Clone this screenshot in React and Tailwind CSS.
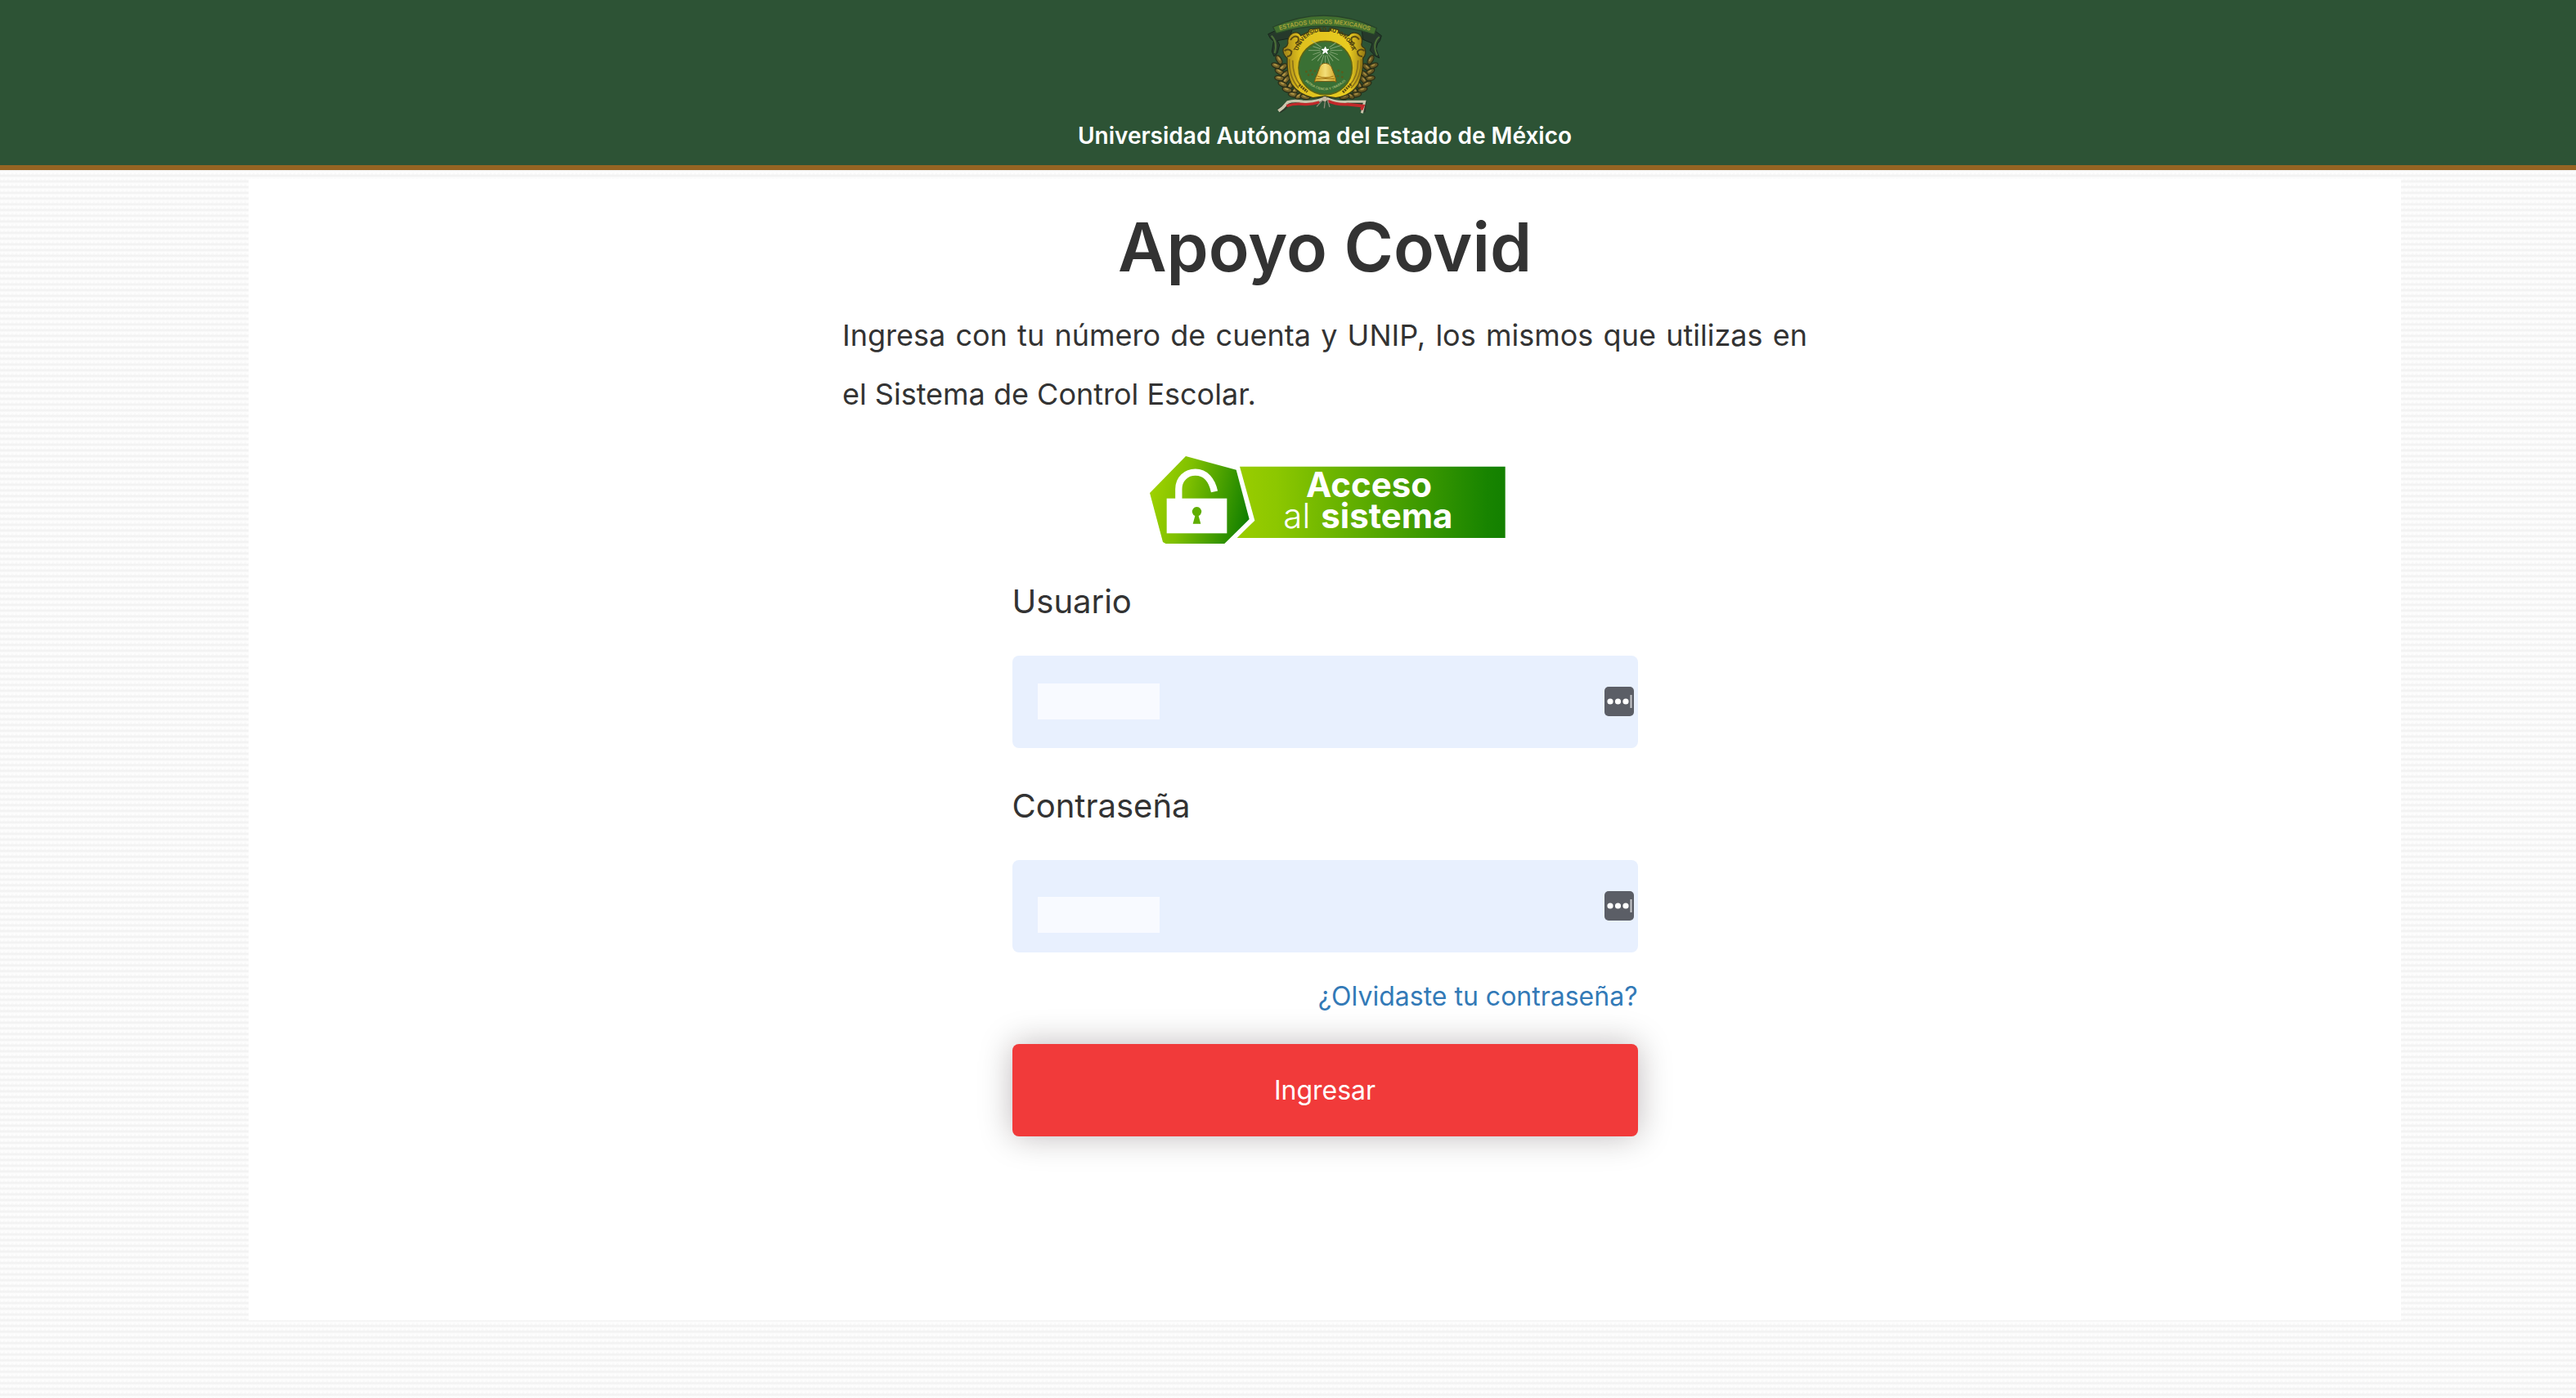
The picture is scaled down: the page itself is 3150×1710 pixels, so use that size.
import React, { useState } from "react";

const Crest = () => (
  <svg viewBox="84 47 432 372" className="w-36 h-31" role="img" aria-label="Escudo UAEM">
    <defs>
      <linearGradient id="gold" x1="0" x2="1" y1="0" y2="0">
        <stop offset="0" stopColor="#a08218" />
        <stop offset="0.2" stopColor="#dfc01d" />
        <stop offset="0.8" stopColor="#e8cb20" />
        <stop offset="1" stopColor="#957712" />
      </linearGradient>
      <linearGradient id="bell" x1="0" x2="1" y1="0" y2="0">
        <stop offset="0" stopColor="#d9b02a" />
        <stop offset="0.5" stopColor="#f3de78" />
        <stop offset="1" stopColor="#cfa324" />
      </linearGradient>
      <path id="ribbonArc" d="M122 114 Q300 58 478 116" />
      <path id="ringArc" d="M201 228 A102 96 0 1 1 401 228" />
      <path id="lowerArc" d="M226 296 Q300 364 378 296" />
    </defs>

    {/* ribbon tails */}
    <path d="M118 112 L92 124 Q98 142 112 150 L106 188 L114 206 L126 194 L134 164 L126 148 L170 140 L180 108 Z" fill="#26392b" stroke="#18271d" strokeWidth="3" />
    <path d="M104 130 Q128 152 116 194" fill="none" stroke="#4b6f38" strokeWidth="6" />
    <path d="M484 112 L508 130 Q504 152 494 158 L488 178 L500 212 L484 204 L466 184 L474 158 L440 144 L436 112 Z" fill="#26392b" stroke="#18271d" strokeWidth="3" />
    <path d="M500 134 Q472 160 492 202" fill="none" stroke="#4b6f38" strokeWidth="6" />

    {/* laurel branches */}
    {[
      [132, 218, 60], [122, 240, 20], [146, 246, -40], [134, 262, 30], [154, 272, -40], [134, 286, 10],
      [158, 292, -50], [146, 308, 25], [174, 312, -60], [162, 328, 15], [190, 332, -60], [184, 346, 10],
      [208, 350, -30], [228, 354, 10],
    ].map(([x, y, a], i) => (
      <g key={i}>
        <ellipse cx={x} cy={y} rx="18" ry="9" transform={`rotate(${a} ${x} ${y})`} fill="#75642a" stroke="#292d17" strokeWidth="4" />
        <ellipse cx={x - 3} cy={y - 2} rx="8" ry="3" transform={`rotate(${a} ${x} ${y})`} fill="#b09546" />
        <ellipse cx={600 - x} cy={y} rx="18" ry="9" transform={`rotate(${-a} ${600 - x} ${y})`} fill="#655722" stroke="#292d17" strokeWidth="4" />
        <ellipse cx={600 - x} cy={y - 2} rx="8" ry="3" transform={`rotate(${-a} ${600 - x} ${y})`} fill="#a08740" />
      </g>
    ))}

    {/* gold frame */}
    <path
      d="M256 106 L278 102 L284 114 L316 114 L324 102 L350 108 L352 120 L388 130 Q398 114 422 122 Q440 134 436 156 Q430 168 446 176 Q456 196 440 212 Q442 262 424 306 Q398 350 340 358 L300 352 L256 358 Q204 346 178 308 Q160 270 162 212 Q142 196 148 176 Q168 168 164 148 Q168 122 192 118 Q206 118 212 130 L240 116 L244 106 Z"
      fill="url(#gold)" stroke="#3a3a16" strokeWidth="4"
    />
    <path d="M174 146 Q186 126 202 136 Q208 152 192 158 M152 186 Q166 174 178 188 Q178 206 162 206 M426 144 Q412 126 398 138 Q394 154 410 158 M446 186 Q432 174 420 188 Q420 206 438 206" fill="none" stroke="#5b4c12" strokeWidth="6" />
    <path d="M170 216 Q168 284 204 322 M182 220 Q182 280 212 314 M434 216 Q434 284 396 322 M422 220 Q422 280 390 314" fill="none" stroke="#8c7318" strokeWidth="5" />
    <path d="M186 182 Q196 164 216 152 M416 182 Q404 162 386 150" fill="none" stroke="#6b5a15" strokeWidth="4" />
    <path d="M206 310 L236 336 M396 308 L366 338" stroke="#5b4c12" strokeWidth="10" strokeDasharray="6 3" />

    {/* inner disc */}
    <circle cx="302" cy="248" r="98" fill="#3a7034" stroke="#5c6518" strokeWidth="5" />
    <g stroke="#9fbb8f" strokeWidth="3">
      {[0, 18, 36, 54, 72, 90, 108, 126, 144, 162, 180, 198, 216, 324, 342].map((a, i) => (
        <line key={a} x1="320" y1="184" x2={i % 2 ? 350 : 364} y2="184" transform={`rotate(${a} 302 184)`} opacity="0.7" />
      ))}
    </g>
    <path d="M302 171 L305 180 L315 180 L307 186 L310 196 L302 190 L293 196 L296 186 L288 180 L298 180 Z" fill="#ffffff" stroke="#ffffff" strokeWidth="3" />
    <path d="M302 231 Q316 231 324 244 L336 274 Q340 282 342 300 L332 297 H272 L262 300 Q264 286 272 272 L282 244 Q288 231 302 231 Z" fill="url(#bell)" stroke="#7b5b12" strokeWidth="3" />
    <path d="M272 278 Q304 290 332 278 M268 288 H336" fill="none" stroke="#a87c18" strokeWidth="4" />
    <g fill="#5b5b1c">
      {[[232, 262], [248, 258], [264, 260], [240, 274], [254, 272], [350, 258], [364, 264], [348, 278], [364, 282]].map(([x, y]) => (
        <circle key={`${x}-${y}`} cx={x} cy={y} r="4" />
      ))}
    </g>
    <text fontSize="12" fill="#a7bd78" fontWeight="600">
      <textPath href="#lowerArc" startOffset="50%" textAnchor="middle">PATRIA CIENCIA Y TRABAJO</textPath>
    </text>
    <text fontSize="20" fill="#4b3f10" fontWeight="700">
      <textPath href="#ringArc" startOffset="50%" textAnchor="middle">UNIVERSIDAD AUTONOMA</textPath>
    </text>

    {/* top ribbon */}
    <path d="M110 98 Q300 12 490 102 L482 126 Q300 66 122 122 Z" fill="#43702f" stroke="#27442a" strokeWidth="4" />
    <text fontSize="22" fill="#a9a53a" fontWeight="600">
      <textPath href="#ribbonArc" startOffset="50%" textAnchor="middle">ESTADOS UNIDOS MEXICANOS</textPath>
    </text>

    {/* tricolor bow */}
    <path d="M294 362 Q260 380 218 376 Q186 372 166 378 L148 396 L132 406" fill="none" stroke="#2b3a2a" strokeWidth="19" />
    <path d="M294 362 Q260 376 218 372 Q186 366 164 374 L146 394 L130 406" fill="none" stroke="#c9c6ad" strokeWidth="11" />
    <path d="M280 374 Q250 384 218 381 Q186 378 160 388" fill="none" stroke="#c22a2b" strokeWidth="10" />
    <path d="M308 362 Q340 380 384 376 L442 378 L440 410" fill="none" stroke="#2b3a2a" strokeWidth="19" />
    <path d="M308 360 Q340 376 384 372 L446 372 L436 414" fill="none" stroke="#c9c6ad" strokeWidth="9" />
    <path d="M312 370 Q344 384 384 382 L440 388 L434 402" fill="none" stroke="#c22a2b" strokeWidth="11" />
    <path d="M300 358 L270 390 M302 362 L298 396 M310 366 L318 392" stroke="#8f8a78" strokeWidth="4" />
    <circle cx="300" cy="362" r="9" fill="#c8b9a0" />
  </svg>
);

const AccessBanner = () => (
  <svg viewBox="60 57 1323 321" className="w-[441px] h-[107px]" role="img" aria-label="Acceso al sistema">
    <defs>
      <linearGradient id="bar" x1="0" x2="1" y1="0" y2="0">
        <stop offset="0" stopColor="#9acd00" />
        <stop offset="0.15" stopColor="#8cc700" />
        <stop offset="0.93" stopColor="#188400" />
        <stop offset="1" stopColor="#138000" />
      </linearGradient>
      <linearGradient id="badge" x1="0" x2="1" y1="0.4" y2="0.6">
        <stop offset="0" stopColor="#9fd200" />
        <stop offset="0.35" stopColor="#7fc000" />
        <stop offset="1" stopColor="#138000" />
      </linearGradient>
    </defs>
    <path d="M408 95 H1382 V357 H398 L463 293 Z" fill="url(#bar)" />
    <path d="M210 57 L395 107 L443 288 L350 380 H140 L126 372 L78 192 Z" fill="url(#badge)" />
    <rect x="140" y="212" width="221" height="128" fill="#fff" />
    <path d="M184 214 V178 C184 140 212 116 245 116 C282 116 306 145 315 187" fill="none" stroke="#fff" strokeWidth="25" />
    <path d="M236 305 L244 276 A17 17 0 1 1 257 276 L265 305 Z" fill="#5fae00" />
    <text x="882" y="208" fontSize="126" fontWeight="700" textAnchor="middle" fill="#fff">Acceso</text>
    <text x="568" y="322" fontSize="126" fontWeight="300" fill="#fff">al</text>
    <text x="706" y="322" fontSize="126" fontWeight="700" fill="#fff">sistema</text>
  </svg>
);

const ManagerIcon = () => (
  <svg viewBox="0 0 36 36" className="absolute right-[5px] top-[38px] w-9 h-9" aria-hidden="true">
    <rect width="36" height="36" rx="5" fill="#5b5e66" />
    <circle cx="7" cy="18" r="3.6" fill="#fff" />
    <circle cx="16.5" cy="18" r="3.6" fill="#fff" />
    <circle cx="26" cy="18" r="3.6" fill="#fff" />
    <rect x="31.5" y="10" width="2" height="16" fill="#c9cacd" />
  </svg>
);

const Field = ({ id, label, type, value, onChange, maskClass }) => (
  <div>
    <label htmlFor={id} className="block text-[40px] leading-12">{label}</label>
    <div className="relative mt-[42px]">
      <input
        id={id}
        type={type}
        value={value}
        onChange={(e) => onChange(e.target.value)}
        className="block w-full h-[113px] rounded-lg bg-[#e8f0fe] px-8 text-[32px] outline-none"
      />
      <span className={`absolute left-[31px] w-[149px] h-11 bg-[#f8faff] pointer-events-none ${maskClass}`} />
      <ManagerIcon />
    </div>
  </div>
);

export default function App() {
  const [user, setUser] = useState("");
  const [password, setPassword] = useState("");

  return (
    <div className="min-h-screen font-['Inter','Liberation_Sans',sans-serif] text-[#333333] bg-[#fafafa] bg-[radial-gradient(circle_at_50%_30%,#ffffff_0,transparent_2px),repeating-linear-gradient(to_bottom,#fdfdfd_0px,#f8f8f8_3px,#f1f1f1_5px,#fbfbfb_7px)] bg-size-[5px_7px,auto]">
      <header className="flex flex-col items-center bg-[#2d5335] border-b-6 border-[#966423] pt-4 pb-5 pl-[90px]">
        <Crest />
        <p className="mt-2.5 text-[28px] leading-8 font-semibold text-white">
          Universidad Autónoma del Estado de México
        </p>
      </header>

      <div className="pt-[11px] pb-[94px] pl-[304px] pr-[214px]">
        <main className="flex flex-col items-center bg-white pt-10 pb-[225px]">
          <h1 className="text-[82px] leading-[88px] font-semibold">Apoyo Covid</h1>
          <p className="mt-[27px] w-full max-w-[1180px] text-[36px] leading-[72px] text-justify">
            Ingresa con tu número de cuenta y UNIP, los mismos que utilizas en el Sistema de Control Escolar.
          </p>
          <div className="mt-10">
            <AccessBanner />
          </div>

          <form className="mt-[47px] w-full max-w-[765px] flex flex-col" onSubmit={(e) => e.preventDefault()}>
            <div className="flex flex-col gap-[47px]">
              <Field id="usuario" label="Usuario" type="text" value={user} onChange={setUser} maskClass="top-[34px]" />
              <Field id="contrasena" label="Contraseña" type="password" value={password} onChange={setPassword} maskClass="top-[45px]" />
            </div>
            <a href="#recuperar" className="mt-[34px] self-end text-[32px] leading-10 text-[#337ab7]">
              ¿Olvidaste tu contraseña?
            </a>
            <button
              type="submit"
              className="mt-[38px] h-[113px] rounded-lg bg-[#f13a3a] text-[32px] text-white shadow-[0_0_40px_rgba(20,0,10,0.28)] cursor-pointer"
            >
              Ingresar
            </button>
          </form>
        </main>
      </div>
    </div>
  );
}
